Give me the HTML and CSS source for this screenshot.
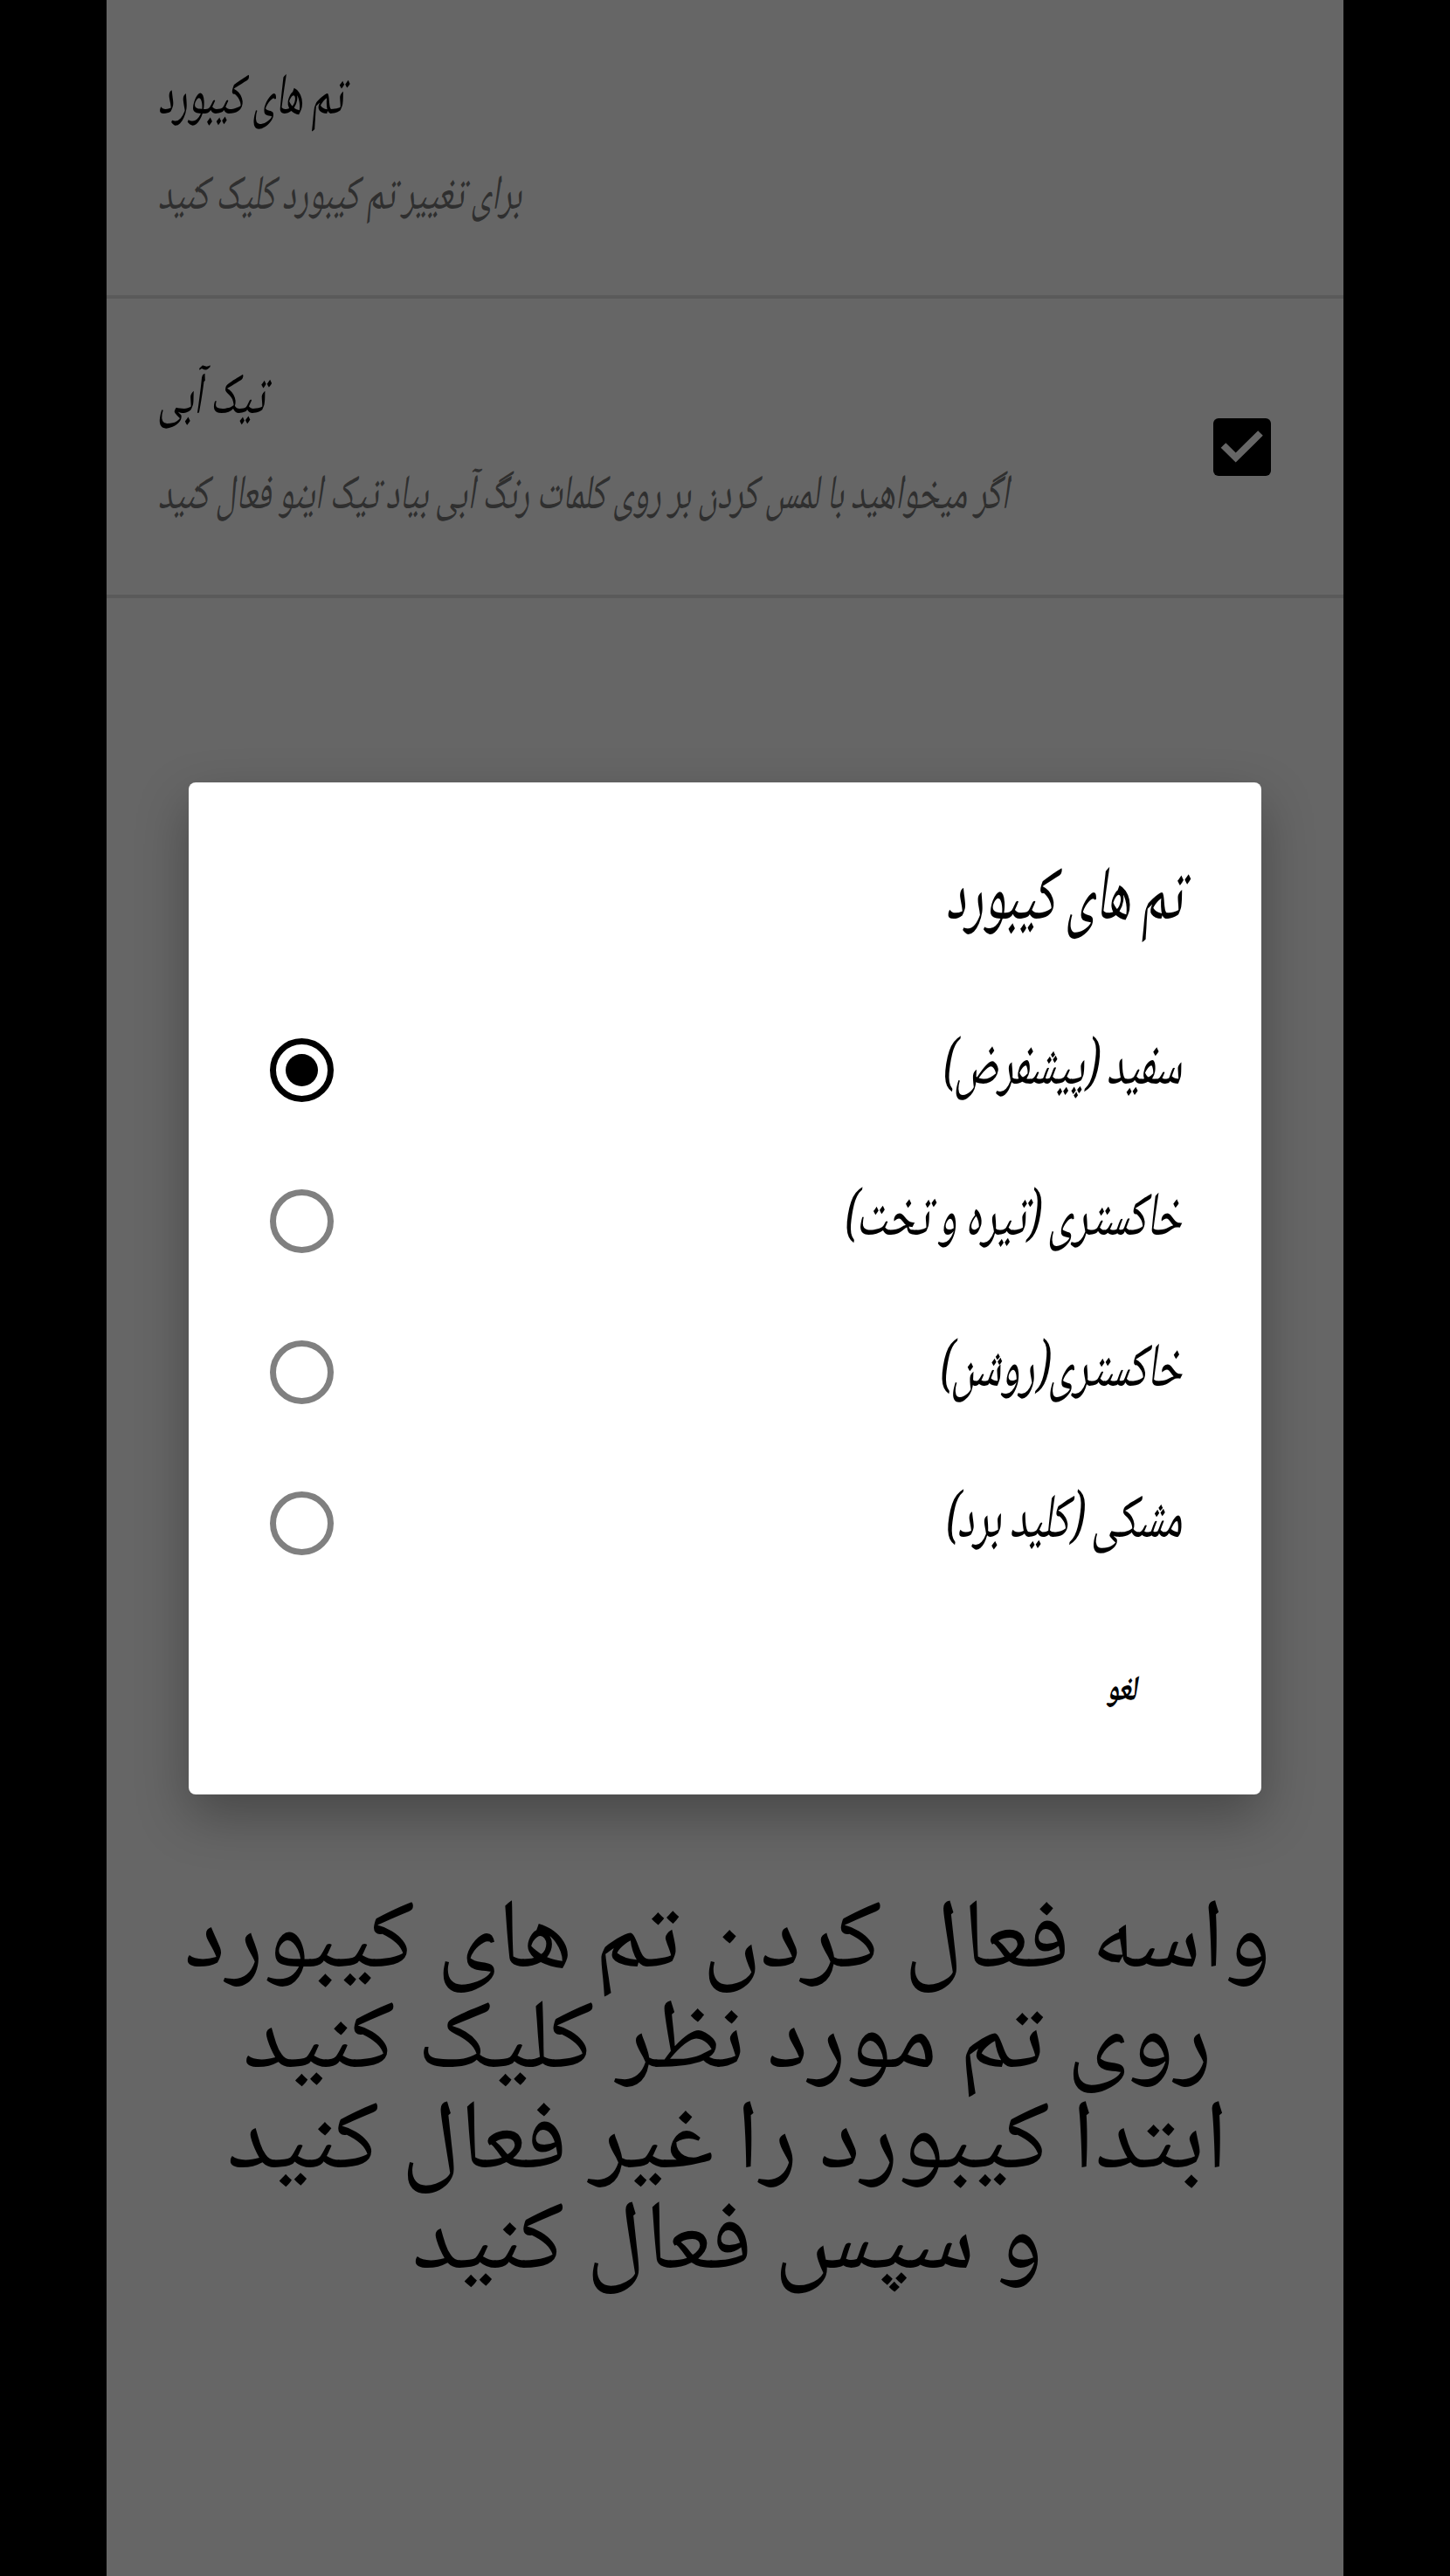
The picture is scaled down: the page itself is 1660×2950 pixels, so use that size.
FILE: index.html
```
<!DOCTYPE html>
<html lang="fa">
<head>
<meta charset="utf-8">
<title>تم های کیبورد</title>
<link rel="stylesheet" href="styles.css">
</head>
<body>
<main class="panel">
  <section class="row">
    <div class="row-text">
      <p class="row-title" dir="rtl">تم های کیبورد</p>
      <p class="row-sub" dir="rtl">برای تغییر تم کیبورد کلیک کنید</p>
    </div>
  </section>
  <section class="row">
    <div class="row-text">
      <p class="row-title" dir="rtl">تیک آبی</p>
      <p class="row-sub" dir="rtl">اگر میخواهید با لمس کردن بر روی کلمات رنگ آبی بیاد تیک اینو فعال کنید</p>
    </div>
    <span class="checkbox">
      <svg viewBox="0 0 66 66" width="66" height="66"><path d="M11.5 31 L25.7 45 L54 17" fill="none" stroke="#fff" stroke-width="8"/></svg>
    </span>
  </section>
  <div class="help" dir="rtl">
    <p>واسه فعال کردن تم های کیبورد</p>
    <p>روی تم مورد نظر کلیک کنید</p>
    <p>ابتدا کیبورد را غیر فعال کنید</p>
    <p>و سپس فعال کنید</p>
  </div>
</main>
<div class="scrim">
  <div class="dialog">
    <h1 class="dialog-title" dir="rtl">تم های کیبورد</h1>
    <ul class="options">
      <li class="option"><span class="radio radio-on"></span><span class="option-label" dir="rtl">سفید (پیشفرض)</span></li>
      <li class="option"><span class="radio"></span><span class="option-label" dir="rtl">خاکستری (تیره و تخت)</span></li>
      <li class="option"><span class="radio"></span><span class="option-label" dir="rtl">خاکستری(روشن)</span></li>
      <li class="option"><span class="radio"></span><span class="option-label" dir="rtl">مشکی (کلید برد)</span></li>
    </ul>
    <div class="actions"><span class="cancel" dir="rtl">لغو</span></div>
  </div>
</div>
</body>
</html>
```
FILE: styles.css
```
* { box-sizing: border-box; }
html, body { margin: 0; padding: 0; }
body {
  width: 1660px;
  height: 2950px;
  background: #000;
  position: relative;
  overflow: hidden;
  font-family: "Noto Naskh Arabic", "Noto Sans Arabic", "DejaVu Sans", sans-serif;
  color: #000;
}
p, h1, ul { margin: 0; padding: 0; }
.panel {
  width: 1416px;
  height: 2950px;
  margin: 0 auto;
  background: #fff;
  display: flex;
  flex-direction: column;
}
.row {
  height: 343px;
  border-bottom: 4px solid #e2e2e2;
  padding: 4px 83px 0 59px;
  display: flex;
  justify-content: space-between;
  align-items: center;
}
.row:first-child { height: 342px; }
.row-text { flex: 1; min-width: 0; display: flex; flex-direction: column; align-items: flex-start; gap: 42px; }
.row-title {
  font-size: 54px;
  line-height: 70px;
  font-style: italic;
  white-space: nowrap;
  transform: scale(0.78, 1.25);
  transform-origin: left center;
}
.row-sub {
  font-size: 47px;
  line-height: 70px;
  color: #757575;
  font-style: italic;
  white-space: nowrap;
  transform: scale(0.8, 1.2);
  transform-origin: left center;
}
.checkbox {
  width: 66px;
  height: 66px;
  background: #000;
  border-radius: 6px;
  flex: none;
  margin-top: -4px;
}
.checkbox svg { display: block; }
.help {
  padding: 1485px 0 0 6px;
  text-align: center;
  font-size: 113px;
  line-height: 115px;
  white-space: nowrap;
}
.scrim {
  position: absolute;
  inset: 0;
  background: rgba(0, 0, 0, 0.6);
  display: flex;
  align-items: center;
  justify-content: center;
}
.dialog {
  width: 1228px;
  height: 1159px;
  background: #fff;
  border-radius: 8px;
  box-shadow: 0 24px 60px rgba(0, 0, 0, 0.3);
  padding: 76px 91px 0 93px;
  display: flex;
  flex-direction: column;
}
.dialog-title {
  font-size: 68px;
  font-weight: 400;
  line-height: 120px;
  text-align: right;
  font-style: italic;
  transform: scale(0.79, 1.3);
  transform-origin: right center;
}
.options { list-style: none; margin-top: 47px; display: flex; flex-direction: column; }
.option { height: 173px; display: flex; align-items: center; justify-content: space-between; }
.option-label {
  font-size: 60px;
  line-height: 100px;
  font-style: italic;
  transform: scale(0.76, 1.2);
  transform-origin: right center;
}
.radio {
  width: 73px;
  height: 73px;
  border: 7px solid #808080;
  border-radius: 50%;
  display: flex;
  align-items: center;
  justify-content: center;
  flex: none;
}
.radio-on { border-color: #000; }
.radio-on::after { content: ""; width: 37px; height: 37px; border-radius: 50%; background: #000; }
.actions { display: flex; justify-content: flex-end; padding: 78px 52px 0 0; }
.cancel { font-size: 34px; line-height: 60px; font-weight: 700; font-style: italic; transform: scale(0.9, 1.2); transform-origin: right center; }
```
